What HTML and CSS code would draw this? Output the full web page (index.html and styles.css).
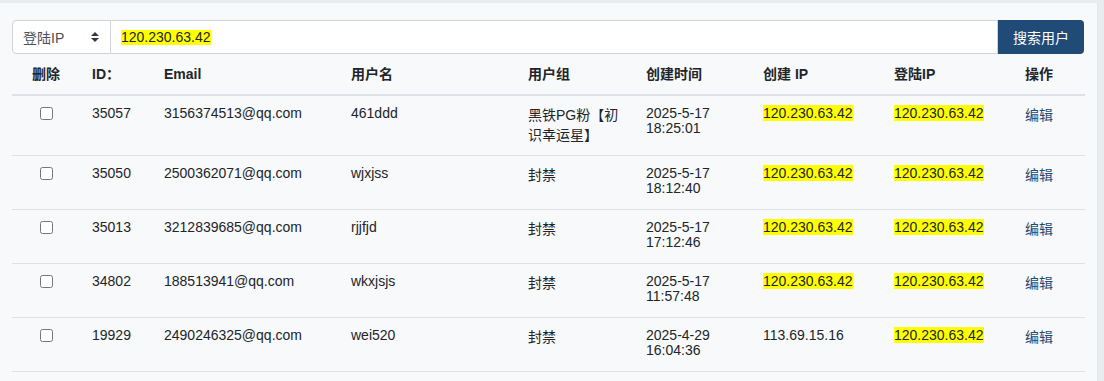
FILE: index.html
```html
<!DOCTYPE html>
<html lang="zh-CN">
<head>
<meta charset="utf-8">
<title>用户搜索</title>
<link rel="stylesheet" href="styles.css">
</head>
<body>
<div class="panel">
  <div class="search">
    <div class="select">
      <span>登陆IP</span>
      <svg class="arrows" width="8" height="10" viewBox="0 0 4 5"><path d="M2 0L0 2h4zm0 5L0 3h4z" fill="#343a40"/></svg>
    </div>
    <div class="field"><span class="hl">120.230.63.42</span></div>
    <button class="btn">搜索用户</button>
  </div>
  <table class="users">
    <colgroup>
      <col class="c1"><col class="c2"><col class="c3"><col class="c4"><col class="c5"><col class="c6"><col class="c7"><col class="c8"><col class="c9">
    </colgroup>
    <thead>
      <tr>
        <th class="center">删除</th>
        <th>ID：</th>
        <th>Email</th>
        <th>用户名</th>
        <th>用户组</th>
        <th>创建时间</th>
        <th>创建 IP</th>
        <th>登陆IP</th>
        <th>操作</th>
      </tr>
    </thead>
    <tbody>
      <tr>
        <td><input type="checkbox" class="chk"></td>
        <td>35057</td>
        <td>3156374513@qq.com</td>
        <td>461ddd</td>
        <td class="grp">黑铁PG粉【初识幸运星】</td>
        <td><div class="dt">2025-5-17<br>18:25:01</div></td>
        <td><span class="hl">120.230.63.42</span></td>
        <td><span class="hl">120.230.63.42</span></td>
        <td class="grp"><a class="edit" href="#">编辑</a></td>
      </tr>
      <tr>
        <td><input type="checkbox" class="chk"></td>
        <td>35050</td>
        <td>2500362071@qq.com</td>
        <td>wjxjss</td>
        <td class="grp">封禁</td>
        <td><div class="dt">2025-5-17<br>18:12:40</div></td>
        <td><span class="hl">120.230.63.42</span></td>
        <td><span class="hl">120.230.63.42</span></td>
        <td class="grp"><a class="edit" href="#">编辑</a></td>
      </tr>
      <tr>
        <td><input type="checkbox" class="chk"></td>
        <td>35013</td>
        <td>3212839685@qq.com</td>
        <td>rjjfjd</td>
        <td class="grp">封禁</td>
        <td><div class="dt">2025-5-17<br>17:12:46</div></td>
        <td><span class="hl">120.230.63.42</span></td>
        <td><span class="hl">120.230.63.42</span></td>
        <td class="grp"><a class="edit" href="#">编辑</a></td>
      </tr>
      <tr>
        <td><input type="checkbox" class="chk"></td>
        <td>34802</td>
        <td>188513941@qq.com</td>
        <td>wkxjsjs</td>
        <td class="grp">封禁</td>
        <td><div class="dt">2025-5-17<br>11:57:48</div></td>
        <td><span class="hl">120.230.63.42</span></td>
        <td><span class="hl">120.230.63.42</span></td>
        <td class="grp"><a class="edit" href="#">编辑</a></td>
      </tr>
      <tr>
        <td><input type="checkbox" class="chk"></td>
        <td>19929</td>
        <td>2490246325@qq.com</td>
        <td>wei520</td>
        <td class="grp">封禁</td>
        <td><div class="dt">2025-4-29<br>16:04:36</div></td>
        <td>113.69.15.16</td>
        <td><span class="hl">120.230.63.42</span></td>
        <td class="grp"><a class="edit" href="#">编辑</a></td>
      </tr>
    </tbody>
  </table>
</div>
</body>
</html>
```
FILE: styles.css
```css
html, body {
  margin: 0;
  padding: 0;
}
body {
  background: #e9ecef;
  font-family: "Liberation Sans", "Noto Sans CJK SC", sans-serif;
  font-size: 14px;
  color: #212529;
}
.panel {
  margin-top: 3px;
  width: 1098px;
  height: 378px;
  box-sizing: border-box;
  background: #f8f9fa;
  border-right: 1px solid #e4e7ea;
  padding: 17px 13px 0 12px;
}
.search {
  display: flex;
  height: 34px;
}
.select {
  width: 99px;
  box-sizing: border-box;
  display: flex;
  align-items: center;
  justify-content: space-between;
  padding: 0 11px 0 10px;
  background: #fff;
  border: 1px solid #ced4da;
  border-radius: 4px 0 0 4px;
  color: #495057;
}
.arrows {
  display: block;
  margin-top: -1px;
}
.field {
  flex: 1;
  display: flex;
  align-items: center;
  padding: 0 10px;
  background: #fff;
  border: 1px solid #ced4da;
  border-left: none;
  line-height: 15px;
}
.btn {
  width: 86px;
  border: none;
  border-radius: 0 4px 4px 0;
  background: #204b77;
  color: #fff;
  font-family: "Liberation Sans", "Noto Sans CJK SC", sans-serif;
  font-size: 14px;
  padding: 0;
  margin: 0;
}
.hl {
  background: #ffff00;
}
.users {
  width: 1073px;
  table-layout: fixed;
  border-collapse: separate;
  border-spacing: 0;
}
.c1 { width: 68px; }
.c2 { width: 72px; }
.c3 { width: 187px; }
.c4 { width: 177px; }
.c5 { width: 118px; }
.c6 { width: 117px; }
.c7 { width: 131px; }
.c8 { width: 131px; }
.c9 { width: 72px; }
.users th {
  text-align: left;
  font-weight: bold;
  padding: 10px 12px;
  line-height: 20px;
  border-bottom: 2px solid #dee2e6;
}
.users th.center {
  text-align: center;
}
.users td {
  padding: 10px 12px;
  vertical-align: top;
  line-height: 15px;
  border-bottom: 1px solid #dee2e6;
}
.users td.grp {
  line-height: 19.5px;
}
.dt {
  min-height: 33px;
}
.chk {
  display: block;
  width: 13px;
  height: 13px;
  margin: 1px auto 0;
}
.edit {
  color: #1e4a76;
  text-decoration: none;
}
```
